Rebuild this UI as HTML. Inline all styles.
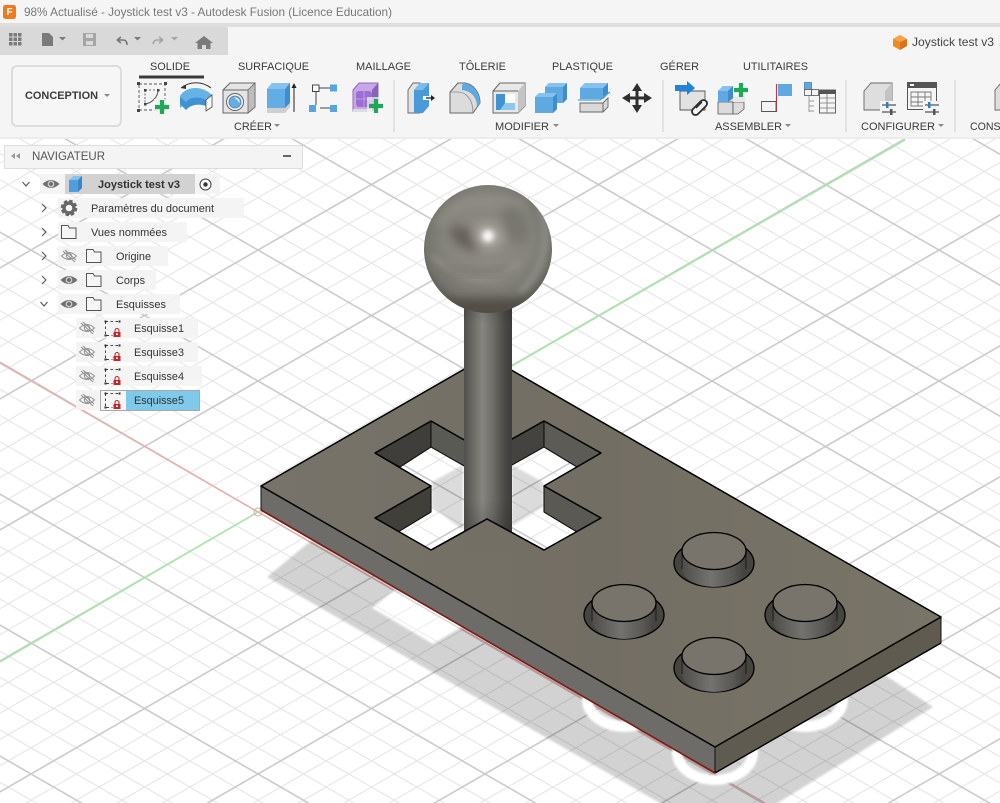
<!DOCTYPE html>
<html><head><meta charset="utf-8"><title>Joystick test v3</title>
<style>
html,body{margin:0;padding:0;background:#fff;width:1000px;height:803px;overflow:hidden}
svg{display:block;position:absolute;left:0;top:0}
text{font-family:"Liberation Sans",sans-serif}
</style></head><body>
<svg width="1000" height="803" viewBox="0 0 1000 803" xmlns="http://www.w3.org/2000/svg">
<defs>
<pattern id="grid" width="113.5" height="113.5" patternUnits="userSpaceOnUse" patternTransform="matrix(1 -0.577 1 0.577 258 512)">
<g stroke="#e3e3e3" stroke-width="1" fill="none">
<path d="M22.7,0V113.5M45.4,0V113.5M68.1,0V113.5M90.8,0V113.5M0,22.7H113.5M0,45.4H113.5M0,68.1H113.5M0,90.8H113.5"/>
</g>
<path d="M0,0V113.5M0,0H113.5M113.5,0V113.5M0,113.5H113.5" stroke="#c8c8c8" stroke-width="1.5" fill="none"/>
</pattern>
<filter id="b1" x="-10%" y="-10%" width="120%" height="120%"><feGaussianBlur stdDeviation="1"/></filter>
<filter id="b3" x="-50%" y="-50%" width="200%" height="200%"><feGaussianBlur stdDeviation="3"/></filter>
<filter id="b5" x="-50%" y="-50%" width="200%" height="200%"><feGaussianBlur stdDeviation="5"/></filter>
<filter id="b8" x="-50%" y="-50%" width="200%" height="200%"><feGaussianBlur stdDeviation="8"/></filter>
<radialGradient id="sph" cx="50%" cy="42%" r="58%">
<stop offset="0" stop-color="#8f8d85"/><stop offset=".6" stop-color="#85847c"/><stop offset=".85" stop-color="#74736c"/><stop offset="1" stop-color="#5a5750"/>
</radialGradient>
<linearGradient id="stick" x1="0" x2="1" y1="0" y2="0">
<stop offset="0" stop-color="#4f4e4a"/><stop offset=".1" stop-color="#5f5e59"/><stop offset=".38" stop-color="#86857f"/><stop offset=".6" stop-color="#6e6d68"/><stop offset=".85" stop-color="#4a4945"/><stop offset="1" stop-color="#3d3c39"/>
</linearGradient>
<linearGradient id="stickV" x1="0" x2="0" y1="0" y2="1">
<stop offset="0" stop-color="#222" stop-opacity=".25"/><stop offset=".1" stop-color="#222" stop-opacity="0"/><stop offset=".85" stop-color="#222" stop-opacity="0"/><stop offset="1" stop-color="#222" stop-opacity=".25"/>
</linearGradient>
<linearGradient id="top" x1="0" x2="1" y1="0" y2="0">
<stop offset="0" stop-color="#77736a"/><stop offset=".5" stop-color="#736e63"/><stop offset="1" stop-color="#797468"/>
</linearGradient>
<linearGradient id="cyl" x1="0" x2="1" y1="0" y2="0">
<stop offset="0" stop-color="#4e4d4a"/><stop offset=".45" stop-color="#74736f"/><stop offset=".8" stop-color="#585753"/><stop offset="1" stop-color="#41403d"/>
</linearGradient>
<clipPath id="sc"><circle cx="488" cy="249" r="64"/></clipPath>
<g id="btn">
<ellipse cx="0" cy="12" rx="40" ry="24" fill="#45443f" stroke="#000" stroke-width="1.3"/>
<path d="M-32,0V17A32,19 0 0 0 32,17V0Z" fill="url(#cyl)"/>
<path d="M-32,0V18M32,0V18" stroke="#1b1b1b" stroke-width="1"/>
<ellipse cx="0" cy="0" rx="32" ry="18.5" fill="#78746b" stroke="#000" stroke-width="1.3"/>
</g>
<g id="eye"><path d="M-8.5,0Q0,-8 8.5,0Q0,8 -8.5,0Z" fill="#6f6f6f"/><circle r="3.4" fill="#c9c9c9"/><circle r="1.9" fill="#666"/></g>
<g id="eyeoff" fill="none" stroke="#939393" stroke-width="1"><path d="M-7.5,0Q0,-7 7.5,0Q0,7 -7.5,0Z"/><circle r="2.6"/><path d="M-6,-5L6,6M-4,-6L7,4" stroke-width="1.1"/></g>
<path id="folder" d="M.5,.5H7L8.5,3H15V13.5H.5Z" fill="#f6f6f6" stroke="#555" stroke-width="1"/>
<g id="sk">
<path d="M1,1H15M1,1V15H8" fill="none" stroke="#444" stroke-width="1" stroke-dasharray="2.5 2.5"/>
<rect x="0" y="0" width="2" height="2" fill="#333"/><rect x="14" y="0" width="2" height="2" fill="#333"/><rect x="0" y="14" width="2" height="2" fill="#333"/>
<path d="M10.500,12V10a2,2 0 0 1 4,0V12" fill="none" stroke="#c4282e" stroke-width="1.1"/>
<rect x="9" y="11.500" width="7" height="5" fill="#c4282e"/><rect x="11.500" y="13" width="2" height="1.500" fill="#fff"/>
</g>
<g id="plus"><path d="M-7,0H7M0,-7V7" stroke="#1fa855" stroke-width="4.2" fill="none"/></g>
</defs>

<!-- VIEWPORT -->
<rect x="0" y="130" width="1000" height="673" fill="#fff"/>
<rect x="0" y="130" width="1000" height="673" fill="url(#grid)"/>
<path d="M0,662L258,512L905,140" stroke="#a8e8a8" stroke-width="1.5" fill="none"/>
<path d="M0,362L258,512L765,803" stroke="#eda9a5" stroke-width="1.2" fill="none"/>

<!-- ground shadow -->
<path d="M267,577L721,838L933,707L870,665L318,535Z" fill="#000" fill-opacity=".175" filter="url(#b1)"/>
<g filter="url(#b1)">
<path d="M372,608L433,644L470,622L395,590Z" fill="#fff"/>
<path fill-rule="evenodd" d="M582,700a43,32 0 1 0 86,0a43,32 0 1 0 -86,0ZM592,698a33,23 0 1 0 66,0a33,23 0 1 0 -66,0Z" fill="#fff"/>
<path fill-rule="evenodd" d="M762,700a43,32 0 1 0 86,0a43,32 0 1 0 -86,0ZM772,698a33,23 0 1 0 66,0a33,23 0 1 0 -66,0Z" fill="#fff"/>
<path fill-rule="evenodd" d="M672,753a43,32 0 1 0 86,0a43,32 0 1 0 -86,0ZM682,751a33,24 0 1 0 66,0a33,24 0 1 0 -66,0Z" fill="#fff"/>
</g>
<path d="M372,608L433,644L470,622L395,590Z" fill="url(#grid)" opacity=".7"/>

<!-- shadow in cross -->
<path d="M432,482L463,465V530L432,507Z" fill="#000" fill-opacity=".14" filter="url(#b1)"/>
<path d="M512,465L543,482V507L512,526Z" fill="#000" fill-opacity=".14" filter="url(#b1)"/>

<!-- origin -->
<circle cx="258" cy="512" r="4" fill="none" stroke="#d9a9a0" stroke-width="1"/>

<!-- plate sides -->
<path d="M261,486L715,747V773L261,510Z" fill="#6d6c68"/>
<path d="M715,747L941,617V643L715,773Z" fill="#5f5b51"/>
<path d="M261,510L715,773" stroke="#7c1a14" stroke-width="1.6" fill="none"/>
<path d="M715,773L941,643" stroke="#000" stroke-width="1.4" fill="none"/>
<path d="M261,486V510M715,747V773M941,617V643" stroke="#111" stroke-width="1" fill="none"/>

<!-- walls -->
<g stroke="#111" stroke-width="1.1" stroke-linejoin="round">
<path d="M375,453L431,421V447L400,467Z" fill="#3f3e3a"/>
<path d="M431,421L487,453V479L431,447Z" fill="#5a5a54"/>
<path d="M544,421L487,453V479L544,447Z" fill="#44433f"/>
<path d="M544,421L601,453L577,467L544,447Z" fill="#5c5b56"/>
<path d="M431,486L375,518L398,532L431,512Z" fill="#403f3a"/>
<path d="M544,486L601,518L577,532L544,512Z" fill="#5a5954"/>
</g>

<!-- plate top -->
<path fill-rule="evenodd" d="M261,486L487,356L941,617L715,747ZM431,421L375,453L431,486L375,518L431,550L487,519L544,550L601,518L544,486L601,453L544,421L487,453Z" fill="url(#top)" stroke="#000" stroke-width="1.5" stroke-linejoin="round"/>

<!-- stick -->
<rect x="464" y="300" width="48" height="235" fill="url(#stick)"/>
<rect x="464" y="300" width="48" height="235" fill="url(#stickV)"/>
<path d="M464,532L487,519L512,533V552H464Z" fill="#746f65"/>
<path d="M431,550L487,519L544,550" stroke="#000" stroke-width="1.5" fill="none"/>

<!-- sphere -->
<circle cx="488" cy="249" r="64" fill="url(#sph)"/>
<g clip-path="url(#sc)">
<ellipse cx="488" cy="312" rx="64" ry="14" fill="#524e46" filter="url(#b5)"/>
<path d="M438,225C452,200 480,196 525,206" fill="none" stroke="#a8a69f" stroke-width="6" opacity=".45" filter="url(#b5)"/>
<ellipse cx="465" cy="238" rx="17" ry="9" transform="rotate(35 465 238)" fill="#65615a" filter="url(#b5)"/>
<ellipse cx="515" cy="225" rx="12" ry="20" transform="rotate(-20 515 225)" fill="#75736c" opacity=".8" filter="url(#b5)"/>
<path d="M432,255C455,282 495,285 520,262" fill="none" stroke="#a09f98" stroke-width="5" opacity=".5" filter="url(#b3)"/>
<path d="M445,268C465,276 490,278 508,270" fill="none" stroke="#6a665e" stroke-width="5" opacity=".6" filter="url(#b5)"/>
<path d="M540,205C552,235 545,270 520,292" fill="none" stroke="#a2a49e" stroke-width="6" opacity=".5" filter="url(#b3)"/>
<ellipse cx="488" cy="236" rx="16" ry="13" fill="#aaa89f" opacity=".8" filter="url(#b5)"/>
<circle cx="488" cy="236" r="6" fill="#fff" filter="url(#b3)"/>
</g>

<!-- buttons -->
<use href="#btn" x="714" y="551"/>
<use href="#btn" x="624" y="603"/>
<use href="#btn" x="805" y="603"/>
<use href="#btn" x="714" y="656"/>

<!-- TITLE BAR + RIBBON -->
<rect x="0" y="0" width="1000" height="138" fill="#f5f5f5"/>
<rect x="0" y="137" width="1000" height="2" fill="#ececec"/>
<rect x="0" y="23" width="1000" height="4" fill="#dedede"/>
<path d="M0,27H226Q228,27 228,29V55H0Z" fill="#d9d9d9"/>
<rect x="3" y="5" width="13" height="14" rx="2.5" fill="#ee7a22"/>
<text x="6.5" y="15" font-size="10" font-weight="bold" fill="#fff">F</text>
<text x="24" y="16" font-size="12" fill="#777" textLength="368" lengthAdjust="spacingAndGlyphs">98% Actualisé - Joystick test v3 - Autodesk Fusion (Licence Education)</text>

<!-- qat -->
<g fill="#7a7a7a">
<path d="M9,33h3.5v3.5h-3.5zM13.5,33h3.5v3.5h-3.5zM18,33h3.5v3.5h-3.5zM9,37.5h3.5v3.5h-3.5zM13.5,37.5h3.5v3.5h-3.5zM18,37.5h3.5v3.5h-3.5zM9,42h3.5v3.5h-3.5zM13.5,42h3.5v3.5h-3.5zM18,42h3.5v3.5h-3.5z"/>
<path d="M42,33h7l4,4v9h-11z"/>
<path d="M59,37h7l-3.5,3.5z"/>
<path d="M83,33h13v13h-13zM86,34v4h7v-4zM86,41v4h7v-4z" fill-rule="evenodd" opacity=".55"/>
<path d="M134,37h7l-3.5,3.5z"/>
<path d="M204,36l9,7h-2.5v6h-4.5v-4h-4v4h-4.5v-6h-2.5z"/>
</g>
<path d="M117,40l4,-3M117,40l4,3M117,40h6q4,0 4,5" stroke="#777" stroke-width="1.6" fill="none"/>
<path d="M163,40l-4,-3M163,40l-4,3M163,40h-6q-3,0 -4,4" stroke="#a5a5a5" stroke-width="1.6" fill="none"/>
<path d="M171,37h7l-3.5,3.5z" fill="#a5a5a5"/>

<!-- doc tab -->
<path d="M900,35l7,4v7l-7,4l-7,-4v-7z" fill="#f08a24"/><path d="M900,42l7,-3v7l-7,4z" fill="#d9741a"/><path d="M893,39l7,-4l7,4l-7,3z" fill="#f7a24d"/>
<text x="912" y="46" font-size="12" fill="#444" textLength="82" lengthAdjust="spacingAndGlyphs">Joystick test v3</text>

<!-- conception -->
<rect x="12" y="66" width="109" height="60" rx="5" fill="#f6f6f6" stroke="#dcdcdc" stroke-width="2"/>
<text x="25" y="99" font-size="11" font-weight="bold" fill="#3c3c3c" textLength="73" lengthAdjust="spacingAndGlyphs">CONCEPTION</text>
<path d="M104,94h6l-3,3z" fill="#888"/>

<!-- tabs -->
<g font-size="11" fill="#3a3a3a">
<text x="150" y="70" textLength="40" lengthAdjust="spacingAndGlyphs">SOLIDE</text>
<text x="238" y="70" textLength="71" lengthAdjust="spacingAndGlyphs">SURFACIQUE</text>
<text x="356" y="70" textLength="55" lengthAdjust="spacingAndGlyphs">MAILLAGE</text>
<text x="459" y="70" textLength="47" lengthAdjust="spacingAndGlyphs">TÔLERIE</text>
<text x="552" y="70" textLength="61" lengthAdjust="spacingAndGlyphs">PLASTIQUE</text>
<text x="660" y="70" textLength="39" lengthAdjust="spacingAndGlyphs">GÉRER</text>
<text x="743" y="70" textLength="65" lengthAdjust="spacingAndGlyphs">UTILITAIRES</text>
<text x="234" y="130" textLength="38" lengthAdjust="spacingAndGlyphs">CRÉER</text>
<text x="495" y="130" textLength="54" lengthAdjust="spacingAndGlyphs">MODIFIER</text>
<text x="715" y="130" textLength="67" lengthAdjust="spacingAndGlyphs">ASSEMBLER</text>
<text x="861" y="130" textLength="74" lengthAdjust="spacingAndGlyphs">CONFIGURER</text>
<text x="970" y="130" textLength="70" lengthAdjust="spacingAndGlyphs">CONSTRUIRE</text>
</g>
<rect x="139" y="75.5" width="65" height="3" fill="#3a3a3a"/>
<g fill="#888"><path d="M274,124h6l-3,3zM553,124h6l-3,3zM785,124h6l-3,3zM938,124h6l-3,3z"/></g>
<path d="M394,80V132M663,80V132M846,80V132M955,80V132" stroke="#dcdcdc" stroke-width="1.5"/>

<!-- 1 sketch -->
<g>
<path d="M139,84H165V110H139Z" fill="none" stroke="#555" stroke-width=".9" stroke-dasharray="3 2"/>
<path d="M145,90V104" stroke="#666" stroke-width="1" stroke-dasharray="2 1.5"/><path d="M145,104C152,103 158,97 158,90" stroke="#555" stroke-width="1" fill="none"/><path d="M145,90H158" stroke="#777" stroke-dasharray="2 2" fill="none"/>
<g fill="#444"><rect x="137" y="82" width="3" height="3"/><rect x="164" y="82" width="3" height="3"/><rect x="137" y="109" width="3" height="3"/><rect x="144" y="89" width="2.5" height="2.5"/><rect x="157" y="89" width="2.5" height="2.5"/><rect x="144" y="103" width="2.5" height="2.5"/></g>
<rect x="154" y="99" width="16" height="16" fill="#f5f5f5" opacity=".8"/>
<use href="#plus" x="162" y="107"/>
</g>
<!-- 2 sweep -->
<g>
<path d="M180,96C186,86 202,85 212,95L206,102C200,96 192,97 187,102L180,108Z" fill="#66b2e6"/>
<path d="M180,97V104L186,110C190,105 198,103 206,106V100C198,96 190,97 186,102Z" fill="#3f93d3"/>
<path d="M206,100L212,95V107L206,111Z" fill="#fff" stroke="#444" stroke-width=".8"/>
<path d="M181,88C190,81 202,81 211,88" fill="none" stroke="#333" stroke-width="1"/><path d="M181,88l5,-3v4z" fill="#333"/>
</g>
<!-- 3 hole -->
<g>
<path d="M223,90L230,83H255V107L248,113H223Z" fill="#e4e4e4" stroke="#666" stroke-width="1"/>
<path d="M248,113V90L255,83V107Z" fill="#bdbdbd" stroke="#666" stroke-width=".8"/>
<path d="M223,90H248" stroke="#666" fill="none"/>
<circle cx="235" cy="102" r="8.5" fill="#f4f4f4" stroke="#666" stroke-width="1"/>
<circle cx="235" cy="102" r="6" fill="#65aee3" stroke="#4c7ea5" stroke-width=".8"/>
<path d="M234,97a6,6 0 0 1 6,6z" fill="#e6e6e6"/>
</g>
<!-- 4 extrude -->
<g>
<path d="M267,89L272,83H290V103L285,108H267Z" fill="#62ade5"/>
<path d="M285,108V89L290,83V103Z" fill="#3f8ecb"/><path d="M267,89L272,83H290L285,89Z" fill="#86c2ec"/>
<path d="M267,108H285L290,103V107L285,113H267Z" fill="#cfcfcf"/>
<path d="M294,112V86" stroke="#222" stroke-width="1"/><path d="M291.5,88L294,83L296.5,88Z" fill="#222"/>
</g>
<!-- 5 nodes -->
<g>
<path d="M319,88H330M316,92V105M320,108H330" stroke="#444" stroke-width="1"/>
<rect x="312.5" y="85" width="6.5" height="6.5" fill="#fff" stroke="#444"/>
<rect x="330" y="84.500" width="7" height="7" fill="#57a5de"/><rect x="309" y="105" width="7" height="7" fill="#57a5de"/><rect x="330" y="105" width="7" height="7" fill="#57a5de"/>
</g>
<!-- 6 purple -->
<g>
<path d="M353,90L359,83H378V105L372,111H353Z" fill="#c9a6e8" stroke="#8f6bb8" stroke-width="1"/>
<rect x="356" y="91" width="16" height="16" rx="3" fill="#9b6fd2"/>
<path d="M364,91V107M356,99H372" stroke="#c7a9e6" stroke-width=".8"/>
<path d="M372,111V90L378,83V105Z" fill="#8a62b5"/>
<path d="M353,109h19v3h-19" fill="#ddd"/>
<rect x="367" y="97" width="16" height="16" fill="#f5f5f5" opacity=".7"/>
<use href="#plus" x="376" y="106"/>
</g>
<!-- 7 press pull -->
<g>
<path d="M408,90L413,83H420V113H408Z" fill="#e3e3e3" stroke="#666" stroke-width=".9"/>
<path d="M414,90L420,83H429V106L423,113H414Z" fill="#4a9ad8"/>
<path d="M414,90L420,83H429L423,90Z" fill="#7bbcec"/>
<path d="M423,98H434" stroke="#f5f5f5" stroke-width="4"/>
<path d="M426,98H432" stroke="#222" stroke-width="1.2"/><path d="M431,95L435,98L431,101Z" fill="#222"/>
</g>
<!-- 8 fillet -->
<g>
<path d="M450,92L458,83H465C473,84 480,92 480,103L473,113H450Z" fill="#dcdcdc" stroke="#666" stroke-width="1"/>
<path d="M463,83C472,83 480,92 480,103L477,107C477,96 470,91 462,90L462,86Z" fill="#5fa9e2"/>
<path d="M450,92H458C465,92 473,98 473,113" fill="none" stroke="#888" stroke-width=".8"/>
</g>
<!-- 9 shell -->
<g>
<path d="M493,91L500,83H525V106L518,113H493Z" fill="#e8e8e8" stroke="#666" stroke-width="1"/>
<path d="M518,113V91L525,83V106Z" fill="#c4c4c4"/>
<path d="M493,91H518" stroke="#666"/>
<rect x="496" y="94" width="19" height="16" fill="#fff"/>
<path d="M496,94H505V103H515V110H496Z" fill="#3f93d3"/>
<path d="M505,103H515V110H500Z" fill="#8ec6ee"/>
</g>
<!-- 10 combine -->
<g>
<path d="M545,87L549,83H567V99L563,103H545Z" fill="#5ea9e2"/>
<path d="M563,103V87L567,83V99Z" fill="#3f8ecb"/><path d="M545,87L549,83H567L563,87Z" fill="#86c2ec"/>
<path d="M535,97L539,93H557V109L553,113H535Z" fill="#5ea9e2"/>
<path d="M553,113V97L557,93V109Z" fill="#3f8ecb"/><path d="M535,97L539,93H557L553,97Z" fill="#86c2ec"/>
</g>
<!-- 11 split -->
<g>
<path d="M580,88L585,83H608V94L603,99H580Z" fill="#5ea9e2"/><path d="M603,99V88L608,83V94Z" fill="#3f8ecb"/><path d="M580,88L585,83H608L603,88Z" fill="#86c2ec"/>
<path d="M578,100H600L610,92" fill="none" stroke="#4f9fdb" stroke-width="1.3"/>
<path d="M580,103H603L608,98V107L603,112H580Z" fill="#d9d9d9" stroke="#666" stroke-width=".9"/>
<path d="M603,103V112" stroke="#666"/>
</g>
<!-- 12 move -->
<g fill="#2f2f2f"><path d="M637,83L642,91H638.500V96.500H644V93L652,98L644,103V99.500H638.500V105H642L637,113L632,105H635.500V99.500H630V103L622,98L630,93V96.500H635.500V91H632Z"/></g>
<!-- 13 joint -->
<g>
<path d="M680,91H705V110H680Z" fill="#e2e2e2" stroke="#555" stroke-width=".9"/>
<path d="M675,85H687V81L695,88L687,95V91H675Z" fill="#1f83d8"/>
<path d="M693,109l8,-8a3.500,3.500 0 0 1 5,5l-8,8a3.500,3.500 0 0 1 -5,-5z" fill="#f5f5f5" stroke="#2b2b2b" stroke-width="1.8"/>
<path d="M696,108l6,-6" stroke="#2b2b2b" stroke-width="1.4"/>
</g>
<!-- 14 new comp -->
<g>
<path d="M718,97L723,92H733V108H718Z" fill="#d9d9d9"/><path d="M718,102H733V114H718Z" fill="#dcdcdc" stroke="#555" stroke-width=".8"/>
<path d="M733,102H744V109L738,114H733Z" fill="#dcdcdc" stroke="#555" stroke-width=".8"/>
<path d="M733,97H745V102H733" fill="#e8e8e8"/>
<path d="M718,91L723,86H733V98L728,102H718Z" fill="#5ea9e2"/><path d="M718,91L723,86H733L728,91Z" fill="#86c2ec"/><path d="M728,102V91L733,86V98Z" fill="#3f8ecb"/>
<use href="#plus" x="741" y="90"/>
</g>
<!-- 15 flag -->
<g>
<rect x="778" y="84" width="14" height="12" fill="#5ea9e2"/>
<path d="M776.500,84V112" stroke="#c4383a" stroke-width="1.1"/>
<path d="M761.500,101.500H776V111.500H761.500Z" fill="#f4f4f4" stroke="#555" stroke-width=".9"/>
</g>
<!-- 16 table tree -->
<g>
<rect x="804.500" y="82.500" width="7" height="7" fill="#5ea9e2" stroke="#4b7ea8" stroke-width=".8"/>
<rect x="804.500" y="89.500" width="7" height="6" fill="#f5f5f5" stroke="#555" stroke-width=".8"/>
<rect x="811.500" y="89.500" width="7" height="6" fill="#f5f5f5" stroke="#555" stroke-width=".8"/>
<path d="M809,96V112M809,101H814M809,106H814M809,111H814" stroke="#999" stroke-width=".9" fill="none"/>
<rect x="819.500" y="90" width="16" height="23" fill="#f5f5f5" stroke="#555" stroke-width=".9"/>
<rect x="819" y="90" width="17" height="4" fill="#555"/>
<path d="M819.500,98H836M819.500,103H836M819.500,108H836M827,94V113" stroke="#777" stroke-width=".8"/>
</g>
<!-- 17 config -->
<g>
<path d="M864,91L871,83H892V104H887V110H864Z" fill="#dedede" stroke="#666" stroke-width=".9"/>
<path d="M885,110V91L892,83V104Z" fill="#c3c3c3"/>
<rect x="880" y="101" width="17" height="15" fill="#f5f5f5"/>
<path d="M882,105H896M882,112H896" stroke="#555" stroke-width="1.3"/>
<rect x="886" y="102" width="2.500" height="6" fill="#2f7fc0"/><rect x="890" y="109" width="2.500" height="6" fill="#555"/>
</g>
<!-- 18 table -->
<g>
<rect x="907.500" y="82.500" width="29" height="27" fill="#f5f5f5" stroke="#555" stroke-width="1"/>
<rect x="907" y="82" width="30" height="6" fill="#555"/><rect x="910" y="84" width="4" height="2" fill="#fff"/>
<path d="M911,92H931V106H911ZM911,97H931M911,102H931M918,92V106M925,92V106" fill="none" stroke="#777" stroke-width=".9"/>
<rect x="923" y="101" width="17" height="15" fill="#f5f5f5"/>
<path d="M925,105H939M925,112H939" stroke="#555" stroke-width="1.3"/>
<rect x="928" y="102" width="2.500" height="6" fill="#2f7fc0"/><rect x="933" y="109" width="2.500" height="6" fill="#555"/>
</g>
<!-- 19 partial -->
<path d="M1001,83L995,90V110H1001Z" fill="#dedede" stroke="#666" stroke-width=".9"/>

<!-- NAVIGATOR -->
<rect x="4.500" y="145.500" width="298" height="23" fill="#f4f4f4" stroke="#dedede"/>
<path d="M15,153V159L11,156ZM20,153V159L16,156Z" fill="#999"/>
<text x="32" y="160" font-size="12" fill="#555" textLength="73" lengthAdjust="spacingAndGlyphs">NAVIGATEUR</text>
<rect x="283" y="155" width="8" height="2" fill="#666"/>

<!-- row bgs -->
<g fill="#f4f4f4" opacity=".95">
<rect x="40" y="174" width="180" height="20"/>
<rect x="58" y="198" width="186" height="20"/>
<rect x="58" y="222" width="129" height="20"/>
<rect x="58" y="246" width="110" height="20"/>
<rect x="58" y="270" width="98" height="20"/>
<rect x="58" y="294" width="122" height="20"/>
<rect x="76" y="318" width="122" height="20"/>
<rect x="76" y="342" width="122" height="20"/>
<rect x="76" y="366" width="126" height="20"/>
<rect x="76" y="390" width="24" height="20"/>
</g>
<rect x="65" y="174" width="130" height="20" fill="#d2d2d2"/>

<!-- chevrons -->
<g fill="none" stroke="#555" stroke-width="1.1">
<path d="M22.500,182L26,186L29.500,182"/>
<path d="M42,204L46,208L42,212"/><path d="M42,228L46,232L42,236"/><path d="M42,252L46,256L42,260"/><path d="M42,276L46,280L42,284"/>
<path d="M40.500,302L44,306L47.500,302"/>
</g>
<use href="#eye" x="51" y="184"/>
<!-- cube -->
<path d="M69,180L74,176H82V188L78,192H69Z" fill="#4f9fdc"/><path d="M69,180L74,176H82L78,180Z" fill="#86c2ec"/><path d="M78,192V180L82,176V188Z" fill="#3b86c4"/>
<text x="98" y="188" font-size="11" font-weight="bold" fill="#333" textLength="82" lengthAdjust="spacingAndGlyphs">Joystick test v3</text>
<circle cx="205.500" cy="184.500" r="5.500" fill="#fafafa" stroke="#444" stroke-width="1"/><circle cx="205.500" cy="184.500" r="2.200" fill="#333"/>
<!-- gear -->
<circle cx="69" cy="208" r="5" fill="none" stroke="#666" stroke-width="3.400"/>
<circle cx="69" cy="208" r="7" fill="none" stroke="#666" stroke-width="2.600" stroke-dasharray="3.400 2.100"/>
<text x="91" y="212" font-size="11" fill="#333" textLength="123" lengthAdjust="spacingAndGlyphs">Paramètres du document</text>
<use href="#folder" x="61" y="225"/>
<text x="91" y="236" font-size="11" fill="#333" textLength="76" lengthAdjust="spacingAndGlyphs">Vues nommées</text>
<use href="#eyeoff" x="69" y="256"/><use href="#folder" x="86" y="249"/>
<text x="116" y="260" font-size="11" fill="#333" textLength="35" lengthAdjust="spacingAndGlyphs">Origine</text>
<use href="#eye" x="69" y="280"/><use href="#folder" x="86" y="273"/>
<text x="116" y="284" font-size="11" fill="#333" textLength="29" lengthAdjust="spacingAndGlyphs">Corps</text>
<use href="#eye" x="69" y="304"/><use href="#folder" x="86" y="297"/>
<text x="116" y="308" font-size="11" fill="#333" textLength="50" lengthAdjust="spacingAndGlyphs">Esquisses</text>

<use href="#eyeoff" x="87" y="328"/><use href="#sk" x="104.500" y="320.500"/>
<text x="134" y="332" font-size="11" fill="#333" textLength="50" lengthAdjust="spacingAndGlyphs">Esquisse1</text>
<use href="#eyeoff" x="87" y="352"/><use href="#sk" x="104.500" y="344.500"/>
<text x="134" y="356" font-size="11" fill="#333" textLength="50" lengthAdjust="spacingAndGlyphs">Esquisse3</text>
<use href="#eyeoff" x="87" y="376"/><use href="#sk" x="104.500" y="368.500"/>
<text x="134" y="380" font-size="11" fill="#333" textLength="50" lengthAdjust="spacingAndGlyphs">Esquisse4</text>
<use href="#eyeoff" x="87" y="400"/>
<rect x="100.500" y="390.500" width="99" height="20" fill="#f6f6f6" stroke="#a8a8a8" stroke-width="1"/>
<rect x="126" y="391" width="73" height="19" fill="#7fc9ea"/>
<use href="#sk" x="104.500" y="392.500"/>
<text x="134" y="404" font-size="11" fill="#333" textLength="50" lengthAdjust="spacingAndGlyphs">Esquisse5</text>
</svg>
</body></html>
